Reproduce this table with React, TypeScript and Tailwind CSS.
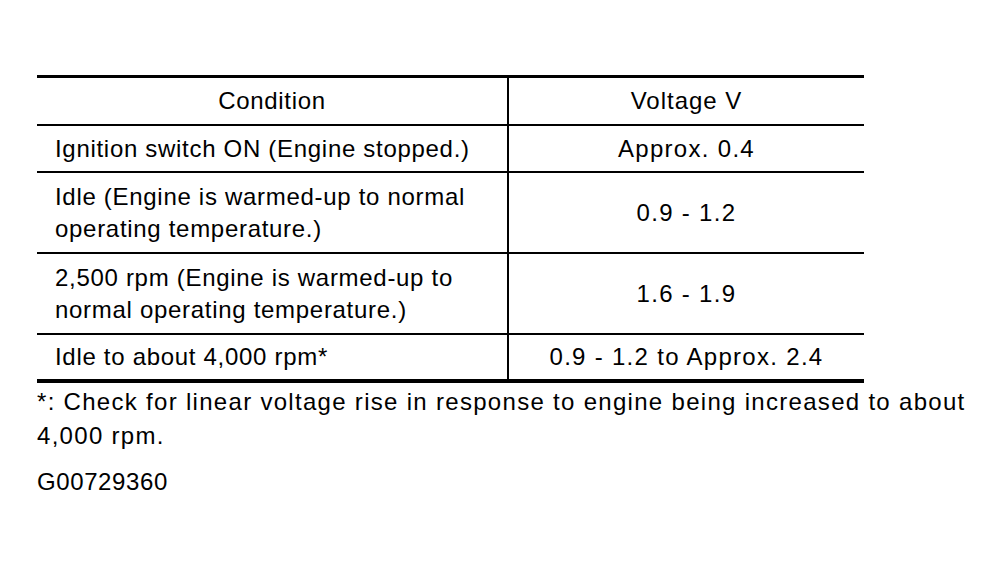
import React from "react";

interface Row {
  condition: string[];
  voltage: string;
  tall?: boolean;
}

const rows: Row[] = [
  { condition: ["Ignition switch ON (Engine stopped.)"], voltage: "Approx. 0.4" },
  { condition: ["Idle (Engine is warmed-up to normal", "operating temperature.)"], voltage: "0.9 - 1.2", tall: true },
  { condition: ["2,500 rpm (Engine is warmed-up to", "normal operating temperature.)"], voltage: "1.6 - 1.9", tall: true },
  { condition: ["Idle to about 4,000 rpm*"], voltage: "0.9 - 1.2 to Approx. 2.4" },
];

function App() {
  return (
    <div
      className="w-[1004px] h-[566px] bg-white text-black pl-[37px] pt-[75px]"
      style={{ fontFamily: '"Liberation Sans", Arial, sans-serif' }}
    >
      {/* Table */}
      <div className="w-[827px] border-t-[3px] border-b-[4px] border-black text-[24px] leading-[32px] tracking-[0.7px]">
        <div className="flex h-[48px] border-b-2 border-black">
          <div className="w-[470px] flex items-center justify-center">Condition</div>
          <div className="flex-1 border-l-2 border-black flex items-center justify-center tracking-[1px]">Voltage V</div>
        </div>
        {rows.map((row, i) => (
          <div
            key={i}
            className={`flex border-black ${i < rows.length - 1 ? "border-b-2" : ""} ${
              row.tall ? "h-[81px]" : i === rows.length - 1 ? "h-[44px]" : "h-[47px]"
            }`}
          >
            <div className="w-[470px] flex flex-col justify-center pl-[18px]">
              {row.condition.map((line, j) => (
                <span key={j}>{line}</span>
              ))}
            </div>
            <div className="flex-1 border-l-2 border-black flex items-center justify-center tracking-[1.3px]">
              {row.voltage}
            </div>
          </div>
        ))}
      </div>

      {/* Footnote */}
      <div className="text-[24px] leading-[34px] tracking-[1.3px] mt-[2px] whitespace-nowrap">
        <p>*: Check for linear voltage rise in response to engine being increased to about</p>
        <p>4,000 rpm.</p>
      </div>
      <p className="text-[24px] leading-[34px] tracking-[0.6px] mt-[12px]">G00729360</p>
    </div>
  );
}

export default App;
